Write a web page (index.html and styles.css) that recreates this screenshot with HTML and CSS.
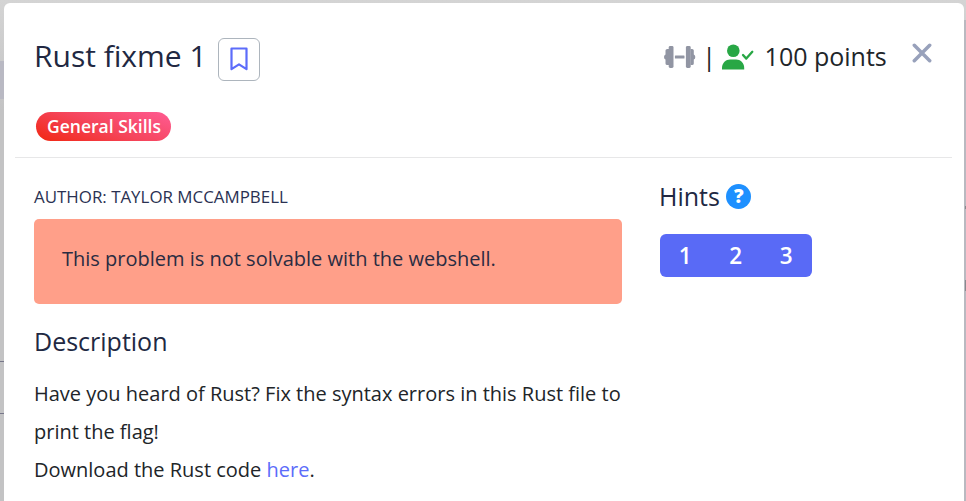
FILE: index.html
```html
<!DOCTYPE html>
<html lang="en">
<head>
<meta charset="utf-8">
<title>Rust fixme 1</title>
<link rel="stylesheet" href="styles.css">
</head>
<body>
<main class="modal">
  <header class="header">
    <div class="title-row">
      <h1 class="title">Rust fixme 1</h1>
      <button class="bookmark" aria-label="Bookmark">
        <svg width="18" height="24" viewBox="0 0 18 24"><path d="M1.500 1.500h15v20.700L9 17.300l-7.500 4.900z" fill="none" stroke="#5c6cfa" stroke-width="2.200" stroke-linejoin="round"/></svg>
      </button>
      <div class="score">
        <svg class="dumbbell" width="32" height="24" viewBox="0 0 32 24" fill="#9195a3"><rect x="4.700" y="1" width="4.800" height="22" rx="1.400"/><rect x="21.900" y="1" width="4.800" height="22" rx="1.400"/><path d="M5 4H3.300Q1.500 4 1.500 5.500V9.500Q0 10 0 12T1.500 14.500V18.500Q1.500 20 3.300 20H5zM26.500 4h1.600Q29.800 4 29.800 5.500V9.500q1.500.5 1.500 2.500T29.800 14.500v4q0 1.500-1.700 1.500h-1.600z"/><rect x="10.900" y="10.500" width="9.600" height="3" rx=".5"/></svg>
        <span class="bar">|</span>
        <svg class="solved" width="32" height="26" viewBox="0 0 32 26"><circle cx="11.300" cy="6.800" r="6.300" fill="#28a745"/><path d="M0 25.500V24c0-5 4-8.400 8-8.400h6.200c4 0 8 3.400 8 8.400v1.500z" fill="#28a745"/><path d="M21 11l3.300 3.600 6-6.800" fill="none" stroke="#28a745" stroke-width="2.300" stroke-linecap="round" stroke-linejoin="round"/></svg>
        <span class="points">100 points</span>
      </div>
      <button class="close" aria-label="Close"><svg width="20" height="20" viewBox="0 0 20 20"><path d="M2.300 2.300l15.400 15.400M17.700 2.300L2.300 17.700" stroke="#98a1bb" stroke-width="3.500" stroke-linecap="round"/></svg></button>
    </div>
    <span class="badge">General Skills</span>
  </header>
  <div class="content">
    <section class="details">
      <p class="author">AUTHOR: TAYLOR MCCAMPBELL</p>
      <div class="notice">This problem is not solvable with the webshell.</div>
      <h2 class="heading">Description</h2>
      <p class="description">Have you heard of Rust? Fix the syntax errors in this Rust file to<br>print the flag!<br>Download the Rust code <a href="#">here</a>.</p>
    </section>
    <aside class="hints">
      <h2 class="hint-heading">Hints <span class="help">?</span></h2>
      <div class="hint-buttons"><button>1</button><button>2</button><button>3</button></div>
    </aside>
  </div>
</main>
</body>
</html>
```

FILE: styles.css
```css
* { box-sizing: border-box; }
body {
  margin: 0;
  height: 501px;
  overflow: hidden;
  padding: 3px 2px 0 4px;
  font-family: "Open Sans", sans-serif;
  color: #212529;
  background:
    linear-gradient(#77778a, #77778a) 0 361px / 4px 1px no-repeat,
    linear-gradient(#77778a, #77778a) 0 413px / 4px 1px no-repeat,
    linear-gradient(#89898e, #89898e) 965px 206px / 1px 3px no-repeat,
    linear-gradient(#89898e, #89898e) 965px 280px / 1px 11px no-repeat,
    linear-gradient(#b9b9c3, #b9b9c3) 0 61px / 4px 38px no-repeat,
    linear-gradient(#b9b9c0, #b9b9c0) 964px 20px / 2px 481px no-repeat,
    linear-gradient(#d4d4d4, #c3c3c4 110px);
}
button { font: inherit; padding: 0; border: 0; background: none; display: flex; align-items: center; justify-content: center; }
h1, h2, p { margin: 0; font-weight: 400; }
svg { display: block; flex: none; }
.modal { height: 510px; background: #fff; border-radius: 6px; }
.header { margin: 0 12px 0 11px; height: 155px; padding: 35px 20px 0 19px; border-bottom: 1px solid #e7e7e8; }
.title-row { display: flex; align-items: flex-start; height: 43px; }
.title { font-size: 30px; line-height: 36px; color: #212842; white-space: nowrap; width: 184px; }
.bookmark { width: 42px; height: 43px; border: 1px solid #adb5bd; border-radius: 6px; }
.bookmark svg { margin: -2px 1px 0 0; }
.score { display: flex; align-items: center; height: 37px; margin-left: 404px; font-size: 25px; white-space: nowrap; }
.bar { width: 26px; text-align: center; line-height: 34px; margin-top: -1px; }
.points { margin-left: 10.600px; line-height: 34px; margin-top: -2px; }
.close { margin-left: auto; margin-top: 5px; width: 20px; height: 20px; }
.badge { display: inline-flex; align-items: center; justify-content: center; width: 135px; height: 29px; padding: 0 0 2px 1px; margin: 31px 0 0 2px; border-radius: 15px; color: #fff; font-size: 17.500px; font-weight: 600; line-height: 24px; white-space: nowrap; background: linear-gradient(20deg, #f12711, #f5455c 50%, #ff5c93); }
.content { display: flex; padding: 25px 30px 0; }
.details { width: 587.500px; }
.author { font-size: 16.900px; line-height: 28px; color: #2a3152; white-space: nowrap; }
.notice { height: 85px; margin-top: 8px; padding: 21px 28px 19px; border-radius: 5px; background: #ff9f89; font-size: 20px; line-height: 38px; color: #2a2c42; white-space: nowrap; }
.heading { margin-top: 18px; font-size: 25px; line-height: 38px; color: #212842; }
.description { margin-top: 15px; font-size: 20px; line-height: 38px; white-space: nowrap; }
.description a { color: #5c6cfa; text-decoration: none; }
.hints { margin-left: 37.500px; }
.hint-heading { display: flex; align-items: center; gap: 6.500px; height: 26px; font-size: 25px; color: #212842; }
.help { display: flex; align-items: center; justify-content: center; width: 25px; height: 25px; border-radius: 50%; background: #1e90ff; color: #fff; font-size: 19px; font-weight: 800; line-height: 25px; }
.hint-buttons { display: flex; width: 151.500px; height: 43px; margin: 25px 0 0 1px; border-radius: 6px; background: #596af6; }
.hint-buttons button { flex: 1; padding-bottom: 1px; color: #fff; font-size: 22.500px; font-weight: 600; }
```
